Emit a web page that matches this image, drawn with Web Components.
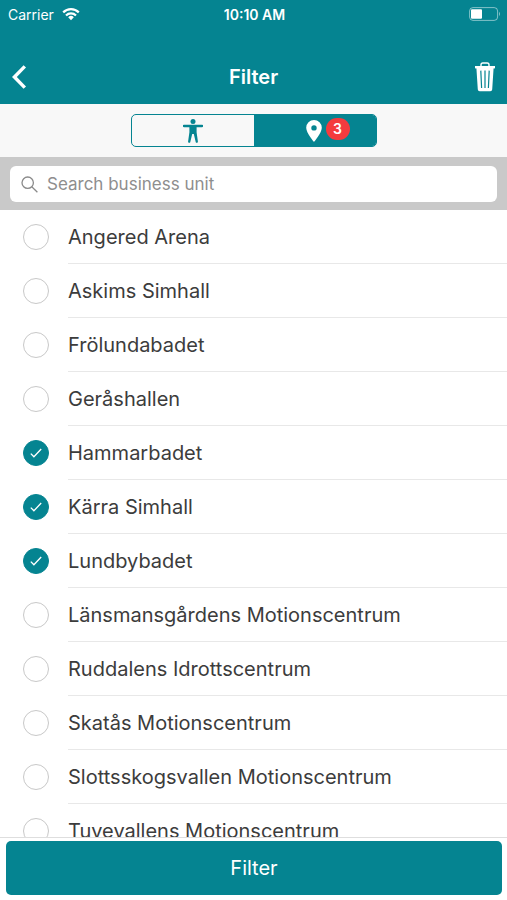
<!DOCTYPE html>
<html lang="en">
<head>
<meta charset="utf-8">
<meta name="viewport" content="width=device-width, initial-scale=1">
<title>Filter</title>
<style>
    body
    {
        margin: 0;
        --teal: #058491;
        font-family: Inter, "Liberation Sans", sans-serif;
        color: #3c3c3c;
        background: #fff;
    }
</style>
</head>
<body>
<filter-page>
    <status-bar slot="header" time="10:10 AM">Carrier</status-bar>
    <nav-bar slot="header">Filter</nav-bar>
    <segment-bar slot="header" count="3"></segment-bar>
    <search-bar slot="header" placeholder="Search business unit"></search-bar>
    <unit-row>Angered Arena</unit-row>
    <unit-row>Askims Simhall</unit-row>
    <unit-row>Frölundabadet</unit-row>
    <unit-row>Geråshallen</unit-row>
    <unit-row checked>Hammarbadet</unit-row>
    <unit-row checked>Kärra Simhall</unit-row>
    <unit-row checked>Lundbybadet</unit-row>
    <unit-row>Länsmansgårdens Motionscentrum</unit-row>
    <unit-row>Ruddalens Idrottscentrum</unit-row>
    <unit-row>Skatås Motionscentrum</unit-row>
    <unit-row>Slottsskogsvallen Motionscentrum</unit-row>
    <unit-row>Tuvevallens Motionscentrum</unit-row>
    <submit-bar slot="footer">Filter</submit-bar>
</filter-page>

<script>
function define(name, html, setup)
{
    const template = document.createElement("template")
    template.innerHTML = `<style>*, :host { box-sizing: border-box; } button { font: inherit; border: none; cursor: pointer; }</style>` + html

    customElements.define(name, class extends HTMLElement
    {
        constructor()
        {
            super()
            const shadow = this.attachShadow({mode:"open"})
            shadow.append(template.content.cloneNode(true))
            if (setup) setup(this, shadow)
        }
    })
}

define("filter-page", `
    <style>
        :host
        {
            display: flex;
            flex-direction: column;
            height: 100vh;
        }

        main
        {
            flex: 1;
            min-height: 0;
            overflow-y: auto;
            scrollbar-width: none;
        }
    </style>
    <header><slot name="header"></slot></header>
    <main><slot></slot></main>
    <footer><slot name="footer"></slot></footer>
`)

define("status-bar", `
    <style>
        :host
        {
            display: grid;
            grid-template-columns: 1fr auto 1fr;
            align-items: center;
            height: 28px;
            padding: 0 6px 0 8px;
            font-size: 14px;
            color: #fff;
            background: var(--teal);
        }

        .carrier
        {
            display: flex;
            align-items: center;
            gap: 8px;
        }

        .time
        {
            font-weight: 600;
        }

        .battery
        {
            justify-self: end;
        }

        svg
        {
            display: block;
        }
    </style>
    <span class="carrier">
        <slot></slot>
        <svg width="18" height="14" viewBox="0 0 18 14" fill="none" stroke="#fff" stroke-width="2.2">
            <path d="M1.2 5.4a11 11 0 0 1 15.6 0"/>
            <path d="M4 8.4a7 7 0 0 1 10 0"/>
            <path d="M9 13.2L6.2 10.2a4 4 0 0 1 5.6 0z" fill="#fff" stroke="none"/>
        </svg>
    </span>
    <span class="time"></span>
    <svg class="battery" width="32" height="14" viewBox="0 0 32 14">
        <rect x=".6" y=".6" width="28" height="12.8" rx="3.4" fill="none" stroke="#fff" stroke-opacity=".5"/>
        <rect x="2" y="2.3" width="11" height="9.4" rx="1" fill="#fff"/>
        <path d="M30 4.8q2 2.2 0 4.4z" fill="#fff" fill-opacity=".5"/>
    </svg>
`, (host, shadow) => {
    shadow.querySelector('.time').textContent = host.getAttribute('time')
})

define("nav-bar", `
    <style>
        :host
        {
            display: grid;
            grid-template-columns: 1fr auto 1fr;
            align-items: center;
            height: 76px;
            padding: 22px 10px 0;
            color: #fff;
            background: var(--teal);
        }

        h1
        {
            margin: 0;
            font-size: 20px;
            line-height: 24px;
            font-weight: 600;
        }

        button
        {
            padding: 0;
            background: none;
        }

        .trash
        {
            justify-self: end;
        }

        .back
        {
            justify-self: start;
        }

        svg
        {
            display: block;
        }
    </style>
    <button class="back" aria-label="Back">
        <svg width="18" height="24" viewBox="0 0 18 24" fill="none" stroke="#fff" stroke-width="3.4">
            <path d="M14.8 1.4L4.4 12l10.4 10.6"/>
        </svg>
    </button>
    <h1><slot></slot></h1>
    <button class="trash" aria-label="Clear filter">
        <svg width="24" height="30" viewBox="0 0 24 30">
            <path d="M8 4.5V2.8Q8 1 9.8 1h4.4Q16 1 16 2.8v1.7" fill="none" stroke="#fff" stroke-width="1.4"/>
            <path d="M2 4h20v2.4H2z" fill="#fff"/>
            <path d="M3.4 6h17.2l-1.4 21.5q-.1 1.7-1.9 1.7H6.7q-1.8 0-1.9-1.7z" fill="#fff"/>
            <path d="M7.8 8.6l.8 17.4M12 8.6V26M16.2 8.6L15.4 26" fill="none" stroke="#058491" stroke-width="1.2"/>
        </svg>
    </button>
`)

define("segment-bar", `
    <style>
        :host
        {
            display: flex;
            justify-content: center;
            padding: 10px 0;
            background: #f8f8f8;
        }

        .segments
        {
            display: grid;
            grid-template-columns: 1fr 1fr;
            width: 246px;
            height: 33px;
            border: 1px solid var(--teal);
            border-radius: 5px;
            overflow: hidden;
        }

        button
        {
            display: flex;
            align-items: center;
            justify-content: center;
            gap: 4px;
            padding: 0;
            color: var(--teal);
            background: none;
        }

        button[aria-pressed="true"]
        {
            padding-left: 26px;
            color: #fff;
            background: var(--teal);
        }

        button[aria-pressed="true"] .count
        {
            margin-bottom: 4px;
        }

        .count
        {
            min-width: 24px;
            padding: 0 7px;
            border-radius: 11px;
            font-size: 14px;
            line-height: 22px;
            font-weight: 600;
            color: #fff;
            background: #f43b3e;
        }
    </style>
    <div class="segments">
        <button aria-label="Activities" aria-pressed="false">
            <svg width="20" height="24" viewBox="0 0 20 24" fill="currentColor">
                <circle cx="10" cy="2.6" r="2.5"/>
                <path d="M1 5.7h18a1.2 1.2 0 0 1 0 2.5h-5.4v5l1.3 9.3a1.1 1.1 0 0 1-2.2.4L10.8 15H9.2l-1.9 7.9a1.1 1.1 0 0 1-2.2-.4l1.3-9.3v-5H1a1.2 1.2 0 0 1 0-2.5z"/>
            </svg>
        </button>
        <button class="places" aria-label="Business units" aria-pressed="true">
            <svg width="16" height="22" viewBox="0 0 16 22">
                <path d="M8 0a7.8 7.8 0 0 1 7.8 7.8C15.8 13 8 22 8 22S.2 13 .2 7.8A7.8 7.8 0 0 1 8 0zm0 5.2a2.7 2.7 0 1 0 0 5.4 2.7 2.7 0 0 0 0-5.4z" fill="currentColor" fill-rule="evenodd"/>
            </svg>
            <span class="count"></span>
        </button>
    </div>
`, (host, shadow) => {
    shadow.querySelector('.count').textContent = host.getAttribute('count')
})

define("search-bar", `
    <style>
        :host
        {
            display: block;
            padding: 9px 10px 8px;
            background: #c9c9c9;
        }

        label
        {
            display: flex;
            align-items: center;
            gap: 9px;
            height: 36px;
            padding: 0 11px;
            border-radius: 6px;
            background: #fff;
        }

        svg
        {
            flex: none;
        }

        input
        {
            flex: 1;
            min-width: 0;
            padding: 0;
            border: none;
            outline: none;
            font: inherit;
            font-size: 17px;
            color: inherit;
            background: none;
        }

        input::placeholder
        {
            color: #8e8e8e;
            opacity: 1;
        }
    </style>
    <label>
        <svg width="17" height="17" viewBox="0 0 17 17" fill="none" stroke="#8a8a8a" stroke-width="1.3">
            <circle cx="6.7" cy="6.7" r="5.7"/>
            <path d="M10.8 10.8l5.6 5.4"/>
        </svg>
        <input type="text">
    </label>
`, (host, shadow) => {
    let input = shadow.querySelector('input')
    input.placeholder = host.getAttribute('placeholder')
    input.setAttribute('aria-label', input.placeholder)
})

define("unit-row", `
    <style>
        :host
        {
            display: block;
        }

        label
        {
            display: flex;
            align-items: center;
            gap: 19px;
            padding-left: 23px;
            cursor: pointer;
        }

        .tick
        {
            display: grid;
            flex: none;
            place-items: center;
        }

        .tick > *
        {
            grid-area: 1 / 1;
        }

        input
        {
            appearance: none;
            width: 26px;
            height: 26px;
            margin: 0;
            border: 1px solid #c8c8c8;
            border-radius: 50%;
        }

        input:checked
        {
            border-color: var(--teal);
            background: var(--teal);
        }

        svg
        {
            visibility: hidden;
            pointer-events: none;
        }

        input:checked + svg
        {
            visibility: visible;
        }

        .name
        {
            flex: 1;
            padding: 15px 0 14px;
            border-bottom: 1px solid #e8e8e8;
            font-size: 20px;
            line-height: 24px;
            white-space: nowrap;
        }
    </style>
    <label>
        <span class="tick">
            <input type="checkbox">
            <svg width="12" height="10" viewBox="0 0 12 10" fill="none" stroke="#fff" stroke-width="1.3">
                <path d="M.8 5.6l3.1 3.2L11.2 1"/>
            </svg>
        </span>
        <span class="name"><slot></slot></span>
    </label>
`, (host, shadow) => {
    shadow.querySelector('input').checked = host.hasAttribute('checked')
})

define("submit-bar", `
    <style>
        :host
        {
            display: block;
            padding: 3px 5px 5px 6px;
            border-top: 1px solid #dedede;
            background: #fff;
        }

        button
        {
            display: block;
            width: 100%;
            padding: 15px;
            border-radius: 5px;
            font-size: 20px;
            line-height: 24px;
            color: #fff;
            background: var(--teal);
        }
    </style>
    <button><slot></slot></button>
`)
</script>
</body>
</html>
